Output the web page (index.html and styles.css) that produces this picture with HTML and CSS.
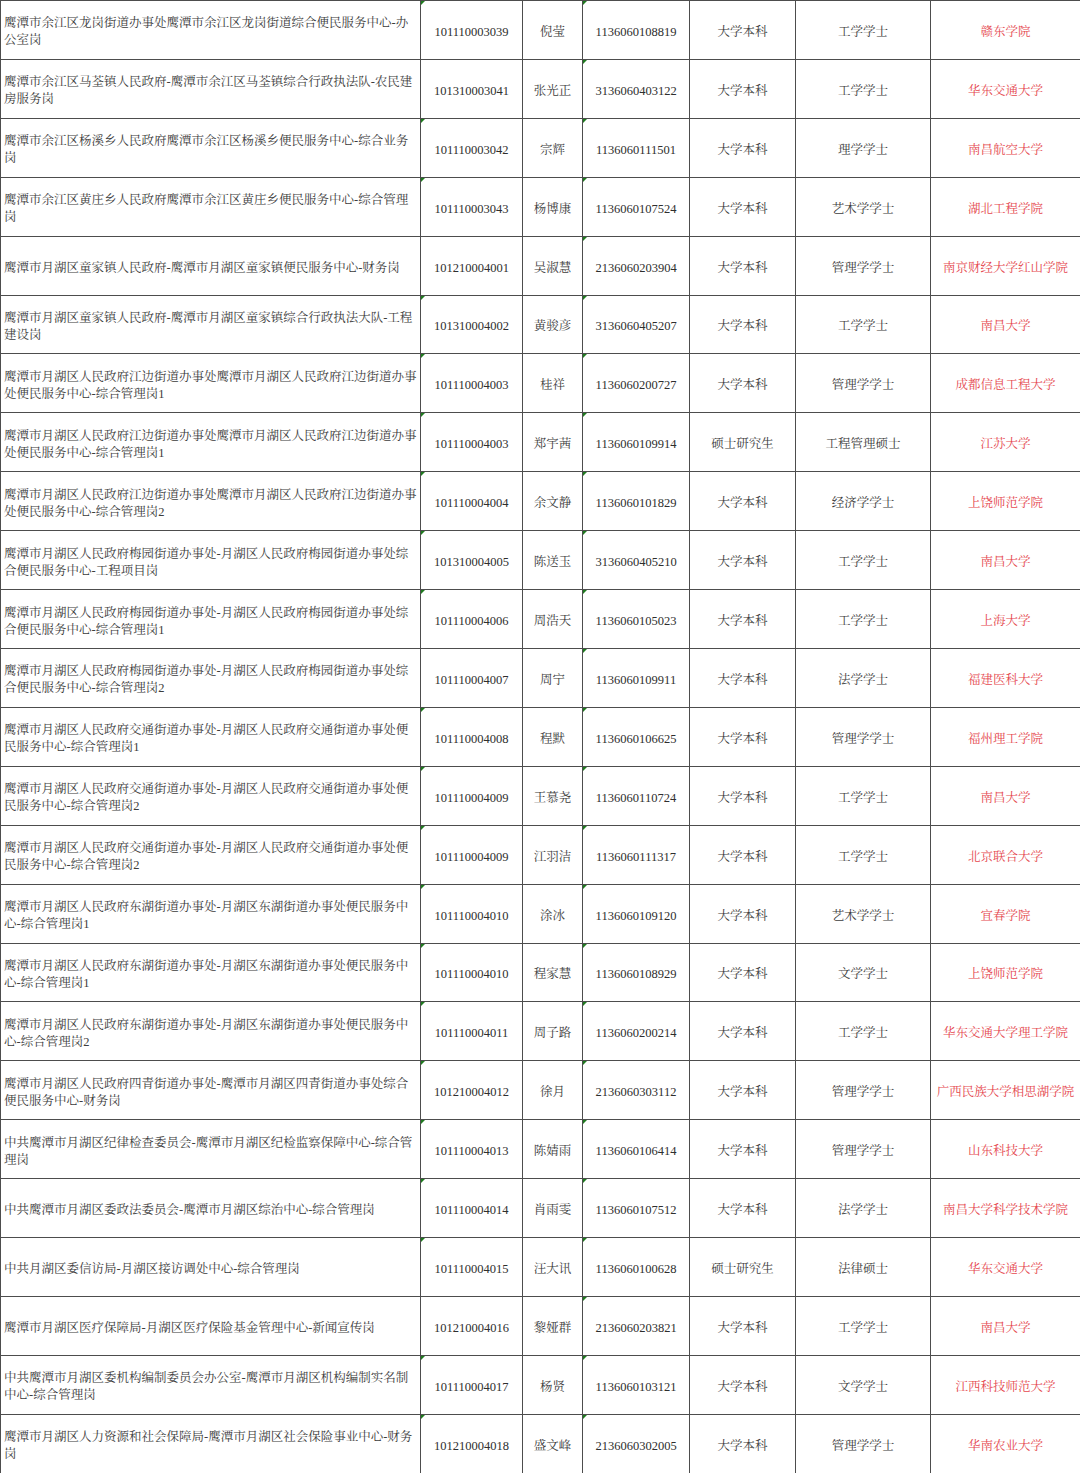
FILE: index.html
```html
<!DOCTYPE html>
<html lang="zh-CN">
<head>
<meta charset="utf-8">
<title>名单</title>
<link rel="stylesheet" href="styles.css">
</head>
<body>
<table class="sheet">
<colgroup>
<col class="c-post"><col class="c-code"><col class="c-name"><col class="c-exam"><col class="c-edu"><col class="c-deg"><col class="c-school">
</colgroup>
<tbody>
<tr><td class="post">鹰潭市余江区龙岗街道办事处鹰潭市余江区龙岗街道综合便民服务中心-办公室岗</td><td class="num mark">101110003039</td><td>倪莹</td><td class="num mark">1136060108819</td><td>大学本科</td><td>工学学士</td><td class="school">赣东学院</td></tr>
<tr><td class="post">鹰潭市余江区马荃镇人民政府-鹰潭市余江区马荃镇综合行政执法队-农民建房服务岗</td><td class="num">101310003041</td><td>张光正</td><td class="num mark">3136060403122</td><td>大学本科</td><td>工学学士</td><td class="school">华东交通大学</td></tr>
<tr><td class="post">鹰潭市余江区杨溪乡人民政府鹰潭市余江区杨溪乡便民服务中心-综合业务岗</td><td class="num mark">101110003042</td><td>宗辉</td><td class="num mark">1136060111501</td><td>大学本科</td><td>理学学士</td><td class="school">南昌航空大学</td></tr>
<tr><td class="post">鹰潭市余江区黄庄乡人民政府鹰潭市余江区黄庄乡便民服务中心-综合管理岗</td><td class="num mark">101110003043</td><td>杨博康</td><td class="num mark">1136060107524</td><td>大学本科</td><td>艺术学学士</td><td class="school">湖北工程学院</td></tr>
<tr><td class="post">鹰潭市月湖区童家镇人民政府-鹰潭市月湖区童家镇便民服务中心-财务岗</td><td class="num">101210004001</td><td>吴淑慧</td><td class="num mark">2136060203904</td><td>大学本科</td><td>管理学学士</td><td class="school">南京财经大学红山学院</td></tr>
<tr><td class="post">鹰潭市月湖区童家镇人民政府-鹰潭市月湖区童家镇综合行政执法大队-工程建设岗</td><td class="num mark">101310004002</td><td>黄骏彦</td><td class="num mark">3136060405207</td><td>大学本科</td><td>工学学士</td><td class="school">南昌大学</td></tr>
<tr><td class="post">鹰潭市月湖区人民政府江边街道办事处鹰潭市月湖区人民政府江边街道办事处便民服务中心-综合管理岗1</td><td class="num mark">101110004003</td><td>桂祥</td><td class="num mark">1136060200727</td><td>大学本科</td><td>管理学学士</td><td class="school">成都信息工程大学</td></tr>
<tr><td class="post">鹰潭市月湖区人民政府江边街道办事处鹰潭市月湖区人民政府江边街道办事处便民服务中心-综合管理岗1</td><td class="num mark">101110004003</td><td>郑宇茜</td><td class="num mark">1136060109914</td><td>硕士研究生</td><td>工程管理硕士</td><td class="school">江苏大学</td></tr>
<tr><td class="post">鹰潭市月湖区人民政府江边街道办事处鹰潭市月湖区人民政府江边街道办事处便民服务中心-综合管理岗2</td><td class="num mark">101110004004</td><td>余文静</td><td class="num mark">1136060101829</td><td>大学本科</td><td>经济学学士</td><td class="school">上饶师范学院</td></tr>
<tr><td class="post">鹰潭市月湖区人民政府梅园街道办事处-月湖区人民政府梅园街道办事处综合便民服务中心-工程项目岗</td><td class="num mark">101310004005</td><td>陈送玉</td><td class="num mark">3136060405210</td><td>大学本科</td><td>工学学士</td><td class="school">南昌大学</td></tr>
<tr><td class="post">鹰潭市月湖区人民政府梅园街道办事处-月湖区人民政府梅园街道办事处综合便民服务中心-综合管理岗1</td><td class="num mark">101110004006</td><td>周浩天</td><td class="num mark">1136060105023</td><td>大学本科</td><td>工学学士</td><td class="school">上海大学</td></tr>
<tr><td class="post">鹰潭市月湖区人民政府梅园街道办事处-月湖区人民政府梅园街道办事处综合便民服务中心-综合管理岗2</td><td class="num">101110004007</td><td>周宁</td><td class="num mark">1136060109911</td><td>大学本科</td><td>法学学士</td><td class="school">福建医科大学</td></tr>
<tr><td class="post">鹰潭市月湖区人民政府交通街道办事处-月湖区人民政府交通街道办事处便民服务中心-综合管理岗1</td><td class="num mark">101110004008</td><td>程默</td><td class="num mark">1136060106625</td><td>大学本科</td><td>管理学学士</td><td class="school">福州理工学院</td></tr>
<tr><td class="post">鹰潭市月湖区人民政府交通街道办事处-月湖区人民政府交通街道办事处便民服务中心-综合管理岗2</td><td class="num mark">101110004009</td><td>王慕尧</td><td class="num mark">1136060110724</td><td>大学本科</td><td>工学学士</td><td class="school">南昌大学</td></tr>
<tr><td class="post">鹰潭市月湖区人民政府交通街道办事处-月湖区人民政府交通街道办事处便民服务中心-综合管理岗2</td><td class="num mark">101110004009</td><td>江羽洁</td><td class="num mark">1136060111317</td><td>大学本科</td><td>工学学士</td><td class="school">北京联合大学</td></tr>
<tr><td class="post">鹰潭市月湖区人民政府东湖街道办事处-月湖区东湖街道办事处便民服务中心-综合管理岗1</td><td class="num mark">101110004010</td><td>涂冰</td><td class="num mark">1136060109120</td><td>大学本科</td><td>艺术学学士</td><td class="school">宜春学院</td></tr>
<tr><td class="post">鹰潭市月湖区人民政府东湖街道办事处-月湖区东湖街道办事处便民服务中心-综合管理岗1</td><td class="num mark">101110004010</td><td>程家慧</td><td class="num mark">1136060108929</td><td>大学本科</td><td>文学学士</td><td class="school">上饶师范学院</td></tr>
<tr><td class="post">鹰潭市月湖区人民政府东湖街道办事处-月湖区东湖街道办事处便民服务中心-综合管理岗2</td><td class="num mark">101110004011</td><td>周子路</td><td class="num mark">1136060200214</td><td>大学本科</td><td>工学学士</td><td class="school">华东交通大学理工学院</td></tr>
<tr><td class="post">鹰潭市月湖区人民政府四青街道办事处-鹰潭市月湖区四青街道办事处综合便民服务中心-财务岗</td><td class="num mark">101210004012</td><td>徐月</td><td class="num mark">2136060303112</td><td>大学本科</td><td>管理学学士</td><td class="school">广西民族大学相思湖学院</td></tr>
<tr><td class="post">中共鹰潭市月湖区纪律检查委员会-鹰潭市月湖区纪检监察保障中心-综合管理岗</td><td class="num mark">101110004013</td><td>陈婧雨</td><td class="num mark">1136060106414</td><td>大学本科</td><td>管理学学士</td><td class="school">山东科技大学</td></tr>
<tr><td class="post">中共鹰潭市月湖区委政法委员会-鹰潭市月湖区综治中心-综合管理岗</td><td class="num mark">101110004014</td><td>肖雨雯</td><td class="num mark">1136060107512</td><td>大学本科</td><td>法学学士</td><td class="school">南昌大学科学技术学院</td></tr>
<tr><td class="post">中共月湖区委信访局-月湖区接访调处中心-综合管理岗</td><td class="num mark">101110004015</td><td>汪大讯</td><td class="num mark">1136060100628</td><td>硕士研究生</td><td>法律硕士</td><td class="school">华东交通大学</td></tr>
<tr><td class="post">鹰潭市月湖区医疗保障局-月湖区医疗保险基金管理中心-新闻宣传岗</td><td class="num">101210004016</td><td>黎娅群</td><td class="num mark">2136060203821</td><td>大学本科</td><td>工学学士</td><td class="school">南昌大学</td></tr>
<tr><td class="post">中共鹰潭市月湖区委机构编制委员会办公室-鹰潭市月湖区机构编制实名制中心-综合管理岗</td><td class="num mark">101110004017</td><td>杨贤</td><td class="num mark">1136060103121</td><td>大学本科</td><td>文学学士</td><td class="school">江西科技师范大学</td></tr>
<tr><td class="post">鹰潭市月湖区人力资源和社会保障局-鹰潭市月湖区社会保险事业中心-财务岗</td><td class="num mark">101210004018</td><td>盛文峰</td><td class="num mark">2136060302005</td><td>大学本科</td><td>管理学学士</td><td class="school">华南农业大学</td></tr>
</tbody>
</table>
</body>
</html>
```
FILE: styles.css
```css
html, body {
  margin: 0;
  padding: 0;
  background: #ffffff;
}

.sheet {
  width: 1080px;
  table-layout: fixed;
  border-collapse: collapse;
  font-family: "Liberation Serif", "Noto Serif CJK SC", "Noto Sans CJK SC", serif;
  font-size: 12.5px;
  line-height: 17px;
  color: #3c3c3c;
}

.c-post { width: 420px; }
.c-code { width: 102px; }
.c-name { width: 60px; }
.c-exam { width: 107px; }
.c-edu { width: 106px; }
.c-deg { width: 135px; }
.c-school { width: 150px; }

.sheet tr {
  height: 58.92px;
}

.sheet td {
  position: relative;
  border: 1px solid #4d4d4d;
  padding: 5px 2px 0 2px;
  text-align: center;
  vertical-align: middle;
  white-space: nowrap;
  overflow: hidden;
}

.sheet td.post {
  text-align: left;
  white-space: normal;
  padding: 5px 2px 0 3px;
  word-break: break-all;
}

.sheet td.num {
  color: #2e2e2e;
}

.sheet td.school {
  color: #e5474e;
}

.sheet td.mark::before {
  content: "";
  position: absolute;
  left: 0;
  top: 0;
  width: 0;
  height: 0;
  border-top: 4px solid #1f7a1f;
  border-right: 4px solid transparent;
}
```
